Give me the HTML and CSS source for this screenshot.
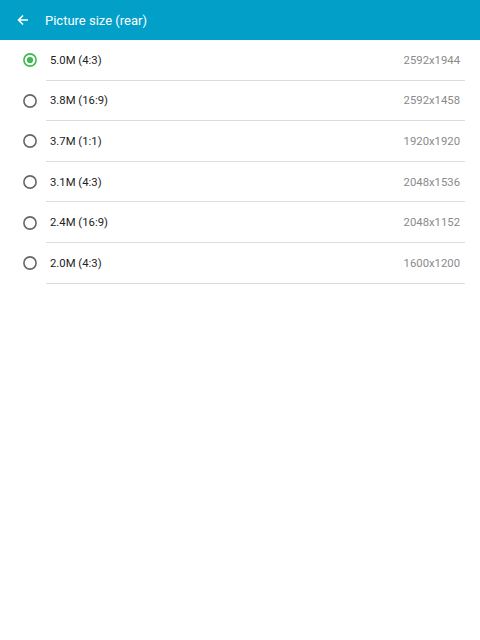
FILE: index.html
```html
<!DOCTYPE html>
<html>
<head>
<meta charset="utf-8">
<link rel="stylesheet" href="styles.css">
</head>
<body>
<div class="appbar">
  <svg class="back" width="12" height="12" viewBox="0 0 12 12"><path d="M11 6H2M6 1.5L1.5 6 6 10.5" fill="none" stroke="#fff" stroke-width="1.6"/></svg>
  <span class="title">Picture size (rear)</span>
</div>
<div class="list">
  <div class="row"><svg class="radio on" viewBox="0 0 14 14"><circle cx="7" cy="7" r="6.1"/><circle class="dot" cx="7" cy="7" r="3.1"/></svg><div class="content"><span class="label">5.0M (4:3)</span><span class="value">2592x1944</span></div></div>
  <div class="row"><svg class="radio" viewBox="0 0 14 14"><circle cx="7" cy="7" r="6.1"/></svg><div class="content"><span class="label">3.8M (16:9)</span><span class="value">2592x1458</span></div></div>
  <div class="row"><svg class="radio" viewBox="0 0 14 14"><circle cx="7" cy="7" r="6.1"/></svg><div class="content"><span class="label">3.7M (1:1)</span><span class="value">1920x1920</span></div></div>
  <div class="row"><svg class="radio" viewBox="0 0 14 14"><circle cx="7" cy="7" r="6.1"/></svg><div class="content"><span class="label">3.1M (4:3)</span><span class="value">2048x1536</span></div></div>
  <div class="row"><svg class="radio" viewBox="0 0 14 14"><circle cx="7" cy="7" r="6.1"/></svg><div class="content"><span class="label">2.4M (16:9)</span><span class="value">2048x1152</span></div></div>
  <div class="row"><svg class="radio" viewBox="0 0 14 14"><circle cx="7" cy="7" r="6.1"/></svg><div class="content"><span class="label">2.0M (4:3)</span><span class="value">1600x1200</span></div></div>
</div>
</body>
</html>
```
FILE: styles.css
```css
* { box-sizing: border-box; }
html, body { margin: 0; padding: 0; background: #fff; }
body { font-family: Roboto, "Liberation Sans", sans-serif; width: 480px; height: 640px; }
.appbar {
  height: 40px;
  background: #02a0c9;
  display: flex;
  align-items: center;
  padding-left: 17px;
}
.back { display: block; margin-right: 16px; }
.title { color: #fff; font-size: 13px; }
.list { display: flex; flex-direction: column; }
.row { display: flex; align-items: stretch; height: 40.6px; padding-right: 15px; }
.radio {
  width: 14px; height: 14px;
  align-self: center;
  margin-left: 23px;
  margin-right: 9px;
  fill: none;
  stroke: #666;
  stroke-width: 1.6;
}
.radio.on { stroke: #3cba4c; }
.radio .dot { fill: #3cba4c; stroke: none; }
.content {
  flex: 1;
  display: flex;
  align-items: center;
  justify-content: space-between;
  border-bottom: 1px solid #dcdcdc;
  padding-left: 4px;
  padding-right: 5px;
  padding-top: 1px;
}
.label { font-size: 11.3px; color: #222; }
.value { font-size: 11.3px; color: #8a8a8a; }
```
